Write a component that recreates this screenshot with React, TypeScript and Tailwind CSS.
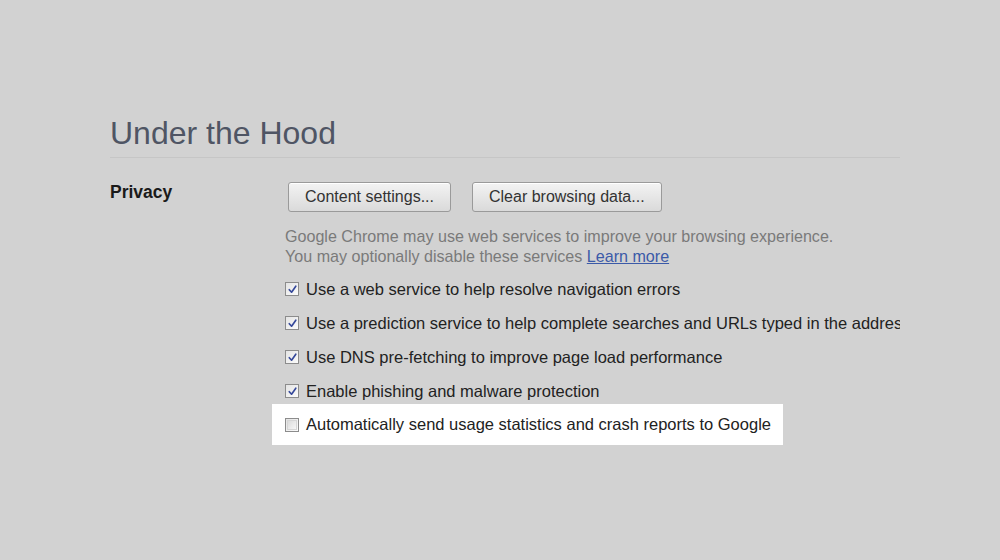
import React from "react";

const options = [
  { label: "Use a web service to help resolve navigation errors", checked: true },
  {
    label: "Use a prediction service to help complete searches and URLs typed in the address bar",
    checked: true,
  },
  { label: "Use DNS pre-fetching to improve page load performance", checked: true },
  { label: "Enable phishing and malware protection", checked: true },
];

function Checkbox({ checked }: { checked: boolean }) {
  return (
    <span className="relative flex h-[14px] w-[14px] shrink-0 items-center justify-center border border-[#8c8c8c] bg-gradient-to-br from-[#e4e4e4] to-[#fbfbfb]">
      {checked ? (
        <svg viewBox="0 0 12 12" className="h-[11px] w-[11px]">
          <path d="M2.5 6.2 L5 9 L9.6 2.4" fill="none" stroke="#35489a" strokeWidth="1.8" strokeLinecap="round" strokeLinejoin="round" />
        </svg>
      ) : (
        <span className="h-[10px] w-[10px] border border-[#d6d6d6] bg-gradient-to-br from-[#dcdcdc] to-[#f6f6f6]" />
      )}
    </span>
  );
}

function Button({ children }: { children: React.ReactNode }) {
  return (
    <button className="h-[30px] rounded-[3px] border border-[#9a9a9a] bg-gradient-to-b from-[#f3f3f3] to-[#dadada] px-[16px] text-[16px] leading-none text-[#333] shadow-[inset_0_1px_0_#fff]">
      {children}
    </button>
  );
}

export default function App() {
  return (
    <div className="h-[560px] w-[1000px] overflow-hidden bg-[#d2d2d2] pl-[110px] pt-[117px] font-['Liberation_Sans',Arial,sans-serif]">
      <div className="w-[790px]">
        <h1 className="text-[32px] leading-[32px] text-[#4f5564]">Under the Hood</h1>
        <div className="mt-[8px] h-px bg-[#c6c6c6]" />

        <div className="mt-[24px] flex">
          <div className="w-[175px] shrink-0 text-[17.5px] font-bold leading-[20px] text-[#1a1a1a]">
            Privacy
          </div>

          <div className="w-[615px]">
            <div className="ml-[3px] flex gap-[21px]">
              <Button>Content settings...</Button>
              <Button>Clear browsing data...</Button>
            </div>

            <p className="mt-[14px] text-[16.1px] leading-[20px] text-[#7a7a7a]">
              Google Chrome may use web services to improve your browsing experience.
              <br />
              You may optionally disable these services{" "}
              <a className="text-[#3b5aa8] underline">Learn more</a>
            </p>

            <div className="mt-[6px]">
              {options.map((o) => (
                <div
                  key={o.label}
                  className="flex h-[34px] items-center gap-[7px] overflow-hidden whitespace-nowrap text-[16.5px] text-[#222]"
                >
                  <Checkbox checked={o.checked} />
                  <span>{o.label}</span>
                </div>
              ))}
              <div className="-ml-[13px] -mt-[4px] flex h-[41px] w-[511px] items-center gap-[7px] whitespace-nowrap bg-white pl-[13px] text-[16.5px] text-[#222]">
                <Checkbox checked={false} />
                <span>Automatically send usage statistics and crash reports to Google</span>
              </div>
            </div>
          </div>
        </div>
      </div>
    </div>
  );
}
